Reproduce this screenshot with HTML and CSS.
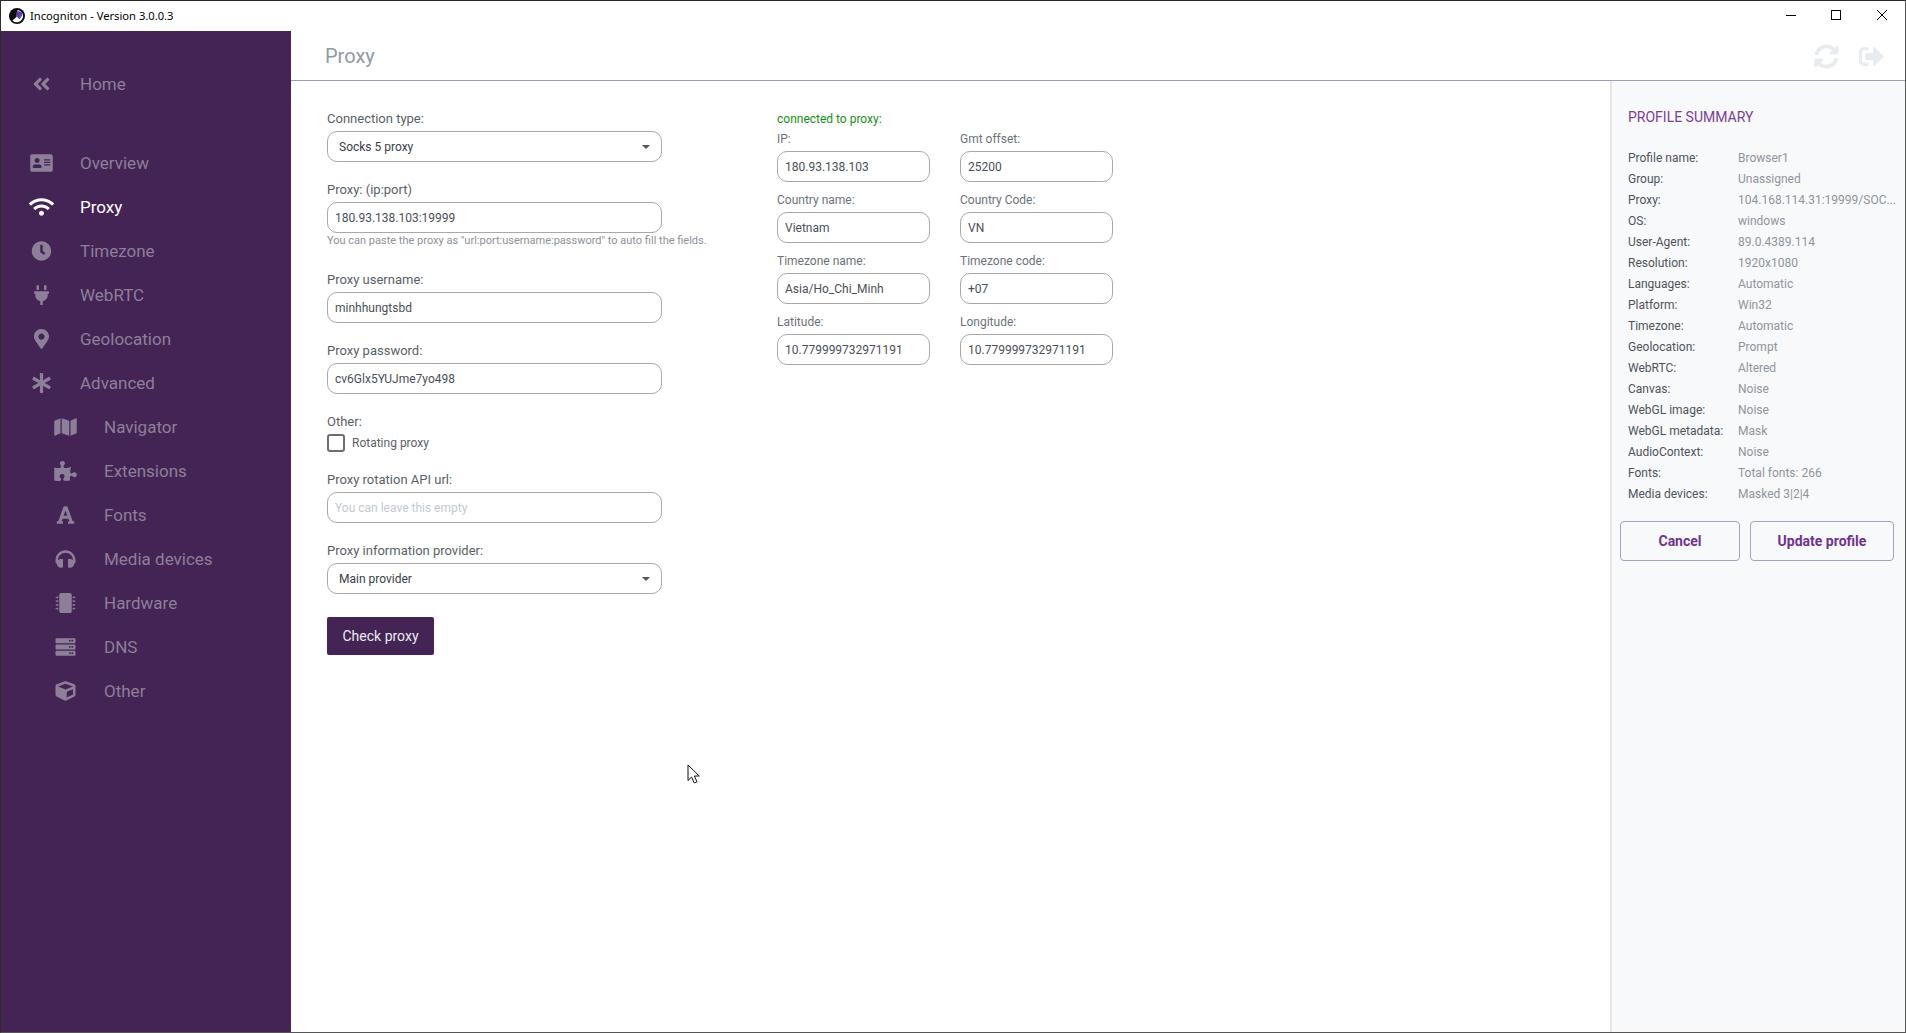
FILE: index.html
```html
<!DOCTYPE html>
<html lang="en">
<head>
<meta charset="utf-8">
<title>Incogniton - Version 3.0.0.3</title>
<link rel="stylesheet" href="styles.css">
</head>
<body>
<div class="window">
  <header class="titlebar">
    <div class="app-title">
      <svg class="app-logo" viewBox="0 0 16 16"><circle cx="8" cy="8" r="8" fill="#0b0b12"/><path d="M8.500 1.900A6.200 6.200 0 1 1 3.400 12.400L7.500 9z" fill="#fff"/><path d="M7.300 5.200C7.600 3.400 9.700 2.900 10.800 3.800 12.200 3.300 13.900 4.900 13.200 6.800L10.500 11.200 7.600 8.600z" fill="#6a35a5"/><path d="M10.800 5.600 13.300 7 10.500 11.200 9.300 9.200z" fill="#3c60c4"/></svg>
      <span>Incogniton - Version 3.0.0.3</span>
    </div>
    <div class="win-controls">
      <svg class="win-btn" viewBox="0 0 12 12"><path d="M2 6.500H12" stroke="#000" fill="none"/></svg>
      <svg class="win-btn" viewBox="0 0 12 12"><rect x="1.500" y="1.500" width="9" height="9" stroke="#000" stroke-width="1" fill="none"/></svg>
      <svg class="win-btn" viewBox="0 0 12 12"><path d="M1 1L11 11M11 1L1 11" stroke="#000" fill="none"/></svg>
    </div>
  </header>
  <div class="app">
    <nav class="sidebar">
      <a class="nav-item nav-home">
        <svg class="nav-icon" viewBox="0 0 448 512"><path d="M223.700 239l136-136c9.400-9.400 24.600-9.400 33.900 0l22.600 22.600c9.400 9.400 9.400 24.600 0 33.900L319.900 256l96.400 96.400c9.400 9.400 9.400 24.600 0 33.900L393.700 409c-9.400 9.400-24.600 9.400-33.900 0l-136-136c-9.500-9.400-9.500-24.600-.1-34zm-192 34l136 136c9.400 9.400 24.600 9.400 33.900 0l22.600-22.600c9.400-9.400 9.400-24.600 0-33.900L127.900 256l96.400-96.400c9.400-9.400 9.400-24.600 0-33.900L201.700 103c-9.400-9.400-24.600-9.400-33.900 0l-136 136c-9.500 9.400-9.500 24.600-.1 34z"/></svg>
        <span>Home</span>
      </a>
      <div class="nav-list">
        <a class="nav-item">
          <svg class="nav-icon" viewBox="0 0 576 512"><path d="M528 32H48C21.500 32 0 53.500 0 80v352c0 26.500 21.500 48 48 48h480c26.500 0 48-21.500 48-48V80c0-26.500-21.500-48-48-48zm-352 96c35.300 0 64 28.700 64 64s-28.700 64-64 64-64-28.700-64-64 28.700-64 64-64zm112 236.800c0 10.600-10 19.200-22.400 19.200H86.400C74 384 64 375.400 64 364.800v-19.200c0-31.800 30.100-57.600 67.200-57.600h5c12.300 5.100 25.700 8 39.800 8s27.600-2.900 39.800-8h5c37.100 0 67.200 25.800 67.200 57.600v19.200zM512 312c0 4.400-3.600 8-8 8H360c-4.400 0-8-3.600-8-8v-16c0-4.400 3.600-8 8-8h144c4.400 0 8 3.600 8 8v16zm0-64c0 4.400-3.600 8-8 8H360c-4.400 0-8-3.600-8-8v-16c0-4.400 3.600-8 8-8h144c4.400 0 8 3.600 8 8v16zm0-64c0 4.400-3.600 8-8 8H360c-4.400 0-8-3.600-8-8v-16c0-4.400 3.600-8 8-8h144c4.400 0 8 3.600 8 8v16z"/></svg>
          <span>Overview</span>
        </a>
        <a class="nav-item is-active">
          <svg class="nav-icon" viewBox="0 0 640 512"><path d="M634.910 154.880C457.740-8.990 182.190-8.930 5.090 154.880c-6.660 6.160-6.790 16.590-.35 22.980l34.240 33.970c6.140 6.100 16.020 6.230 22.400.38 145.920-133.680 371.300-133.710 517.250 0 6.380 5.850 16.260 5.710 22.400-.38l34.240-33.970c6.430-6.390 6.300-16.820-.36-22.980zM320 352c-35.350 0-64 28.650-64 64s28.650 64 64 64 64-28.650 64-64-28.650-64-64-64zm202.670-83.590c-115.260-101.930-290.210-101.820-405.340 0-6.900 6.100-7.120 16.690-.57 23.150l34.440 33.990c6 5.920 15.660 6.320 22.050.8 83.950-72.570 209.740-72.410 293.490 0 6.390 5.520 16.050 5.130 22.050-.8l34.440-33.990c6.560-6.460 6.330-17.060-.56-23.150z"/></svg>
          <span>Proxy</span>
        </a>
        <a class="nav-item">
          <svg class="nav-icon" viewBox="0 0 512 512"><path d="M256 8C119 8 8 119 8 256s111 248 248 248 248-111 248-248S393 8 256 8zm92.490 313l-20 25a16 16 0 0 1-22.490 2.500l-67-49.720a40 40 0 0 1-15-31.230V112a16 16 0 0 1 16-16h32a16 16 0 0 1 16 16v144l58 42.500a16 16 0 0 1 2.490 22.500z"/></svg>
          <span>Timezone</span>
        </a>
        <a class="nav-item">
          <svg class="nav-icon" viewBox="0 0 384 512"><path d="M320 32a32 32 0 0 0-64 0v96h64zm48 128H16a16 16 0 0 0-16 16v32a16 16 0 0 0 16 16h16v32a160.070 160.070 0 0 0 128 156.800V512h64v-99.200A160.070 160.070 0 0 0 352 256v-32h16a16 16 0 0 0 16-16v-32a16 16 0 0 0-16-16zM128 32a32 32 0 0 0-64 0v96h64z"/></svg>
          <span>WebRTC</span>
        </a>
        <a class="nav-item">
          <svg class="nav-icon" viewBox="0 0 384 512"><path d="M172.268 501.670C26.970 291.031 0 256.162 0 192 0 85.961 85.961 0 192 0s192 85.961 192 192c0 64.162-26.970 99.031-172.268 309.670-9.535 13.774-29.930 13.773-39.464 0zM192 272c44.183 0 80-35.817 80-80s-35.817-80-80-80-80 35.817-80 80 35.817 80 80 80z"/></svg>
          <span>Geolocation</span>
        </a>
        <a class="nav-item">
          <svg class="nav-icon" viewBox="0 0 512 512"><path d="M478.210 334.093L336 256l142.210-78.093c11.795-6.477 15.961-21.384 9.232-33.037l-19.480-33.741c-6.728-11.653-21.720-15.499-33.227-8.523L296 186.718l3.475-162.204C299.763 11.061 288.937 0 275.480 0h-38.960c-13.456 0-24.283 11.061-23.994 24.514L216 186.718 77.265 102.607c-11.506-6.976-26.499-3.130-33.227 8.523l-19.480 33.741c-6.728 11.653-2.562 26.560 9.233 33.037L176 256 33.790 334.093c-11.795 6.477-15.961 21.384-9.232 33.037l19.480 33.741c6.728 11.653 21.721 15.499 33.227 8.523L216 325.282l-3.475 162.204C212.237 500.939 223.064 512 236.520 512h38.961c13.456 0 24.283-11.061 23.995-24.514L296 325.282l138.735 84.111c11.506 6.976 26.499 3.130 33.227-8.523l19.480-33.741c6.728-11.653 2.563-26.559-9.232-33.036z"/></svg>
          <span>Advanced</span>
        </a>
        <a class="nav-item nav-sub">
          <svg class="nav-icon" viewBox="0 0 576 512"><path d="M0 117.660v346.320c0 11.320 11.430 19.060 21.940 14.860L160 416V32L20.120 87.950A32.006 32.006 0 0 0 0 117.660zM192 416l192 64V96L192 32v384zM554.060 33.160L416 96v384l139.880-55.950A31.996 31.996 0 0 0 576 394.340V48.020c0-11.320-11.430-19.060-21.940-14.860z"/></svg>
          <span>Navigator</span>
        </a>
        <a class="nav-item nav-sub">
          <svg class="nav-icon" viewBox="0 0 576 512"><path d="M519.442 288.651c-41.519 0-59.500 31.593-82.058 31.593C377.409 320.244 432 144 432 144s-196.288 80-196.288-3.297c0-35.827 36.288-46.250 36.288-85.985C272 19.216 243.885 0 210.539 0c-34.654 0-66.366 18.891-66.366 56.346 0 41.364 31.711 59.277 31.711 81.750C175.885 207.719 0 166.758 0 166.758v333.237s178.635 41.047 178.635-28.662c0-22.473-40-40.107-40-81.471 0-37.456 29.250-56.346 63.577-56.346 33.673 0 61.788 19.216 61.788 54.717 0 39.735-36.288 50.158-36.288 85.985 0 60.803 129.675 25.730 181.230 25.730 0 0-34.725-120.101 25.827-120.101 35.962 0 46.423 36.152 86.308 36.152C556.712 416 576 387.990 576 354.443c0-34.199-18.962-65.792-56.558-65.792z"/></svg>
          <span>Extensions</span>
        </a>
        <a class="nav-item nav-sub">
          <svg class="nav-icon" viewBox="0 0 448 512"><path d="M432 416h-23.410L277.880 53.690A32 32 0 0 0 247.580 32h-47.160a32 32 0 0 0-30.300 21.690L39.410 416H16a16 16 0 0 0-16 16v32a16 16 0 0 0 16 16h128a16 16 0 0 0 16-16v-32a16 16 0 0 0-16-16h-19.600l23.300-64h152.600l23.300 64H304a16 16 0 0 0-16 16v32a16 16 0 0 0 16 16h128a16 16 0 0 0 16-16v-32a16 16 0 0 0-16-16zM176.850 272L224 143.110 271.150 272z"/></svg>
          <span>Fonts</span>
        </a>
        <a class="nav-item nav-sub">
          <svg class="nav-icon" viewBox="0 0 512 512"><path d="M256 32C114.520 32 0 146.496 0 288v48a32 32 0 0 0 17.689 28.622l14.383 7.191C34.083 431.903 83.421 480 144 480h24c13.255 0 24-10.745 24-24V280c0-13.255-10.745-24-24-24h-24c-31.342 0-59.671 12.879-80 33.627V288c0-105.869 86.131-192 192-192s192 86.131 192 192v1.627C427.671 268.879 399.342 256 368 256h-24c-13.255 0-24 10.745-24 24v176c0 13.255 10.745 24 24 24h24c60.579 0 109.917-48.098 111.928-108.187l14.382-7.191A32 32 0 0 0 512 336v-48c0-141.479-114.496-256-256-256z"/></svg>
          <span>Media devices</span>
        </a>
        <a class="nav-item nav-sub">
          <svg class="nav-icon" viewBox="0 0 512 512"><path d="M416 48v416c0 26.510-21.490 48-48 48H144c-26.510 0-48-21.490-48-48V48c0-26.510 21.490-48 48-48h224c26.510 0 48 21.490 48 48zm96 58v12a6 6 0 0 1-6 6h-18v6a6 6 0 0 1-6 6h-42V88h42a6 6 0 0 1 6 6v6h18a6 6 0 0 1 6 6zm0 96v12a6 6 0 0 1-6 6h-18v6a6 6 0 0 1-6 6h-42v-48h42a6 6 0 0 1 6 6v6h18a6 6 0 0 1 6 6zm0 96v12a6 6 0 0 1-6 6h-18v6a6 6 0 0 1-6 6h-42v-48h42a6 6 0 0 1 6 6v6h18a6 6 0 0 1 6 6zm0 96v12a6 6 0 0 1-6 6h-18v6a6 6 0 0 1-6 6h-42v-48h42a6 6 0 0 1 6 6v6h18a6 6 0 0 1 6 6zM30 376h42v48H30a6 6 0 0 1-6-6v-6H6a6 6 0 0 1-6-6v-12a6 6 0 0 1 6-6h18v-6a6 6 0 0 1 6-6zm0-96h42v48H30a6 6 0 0 1-6-6v-6H6a6 6 0 0 1-6-6v-12a6 6 0 0 1 6-6h18v-6a6 6 0 0 1 6-6zm0-96h42v48H30a6 6 0 0 1-6-6v-6H6a6 6 0 0 1-6-6v-12a6 6 0 0 1 6-6h18v-6a6 6 0 0 1 6-6zm0-96h42v48H30a6 6 0 0 1-6-6v-6H6a6 6 0 0 1-6-6v-12a6 6 0 0 1 6-6h18v-6a6 6 0 0 1 6-6z"/></svg>
          <span>Hardware</span>
        </a>
        <a class="nav-item nav-sub">
          <svg class="nav-icon" viewBox="0 0 512 512"><path d="M480 160H32c-17.673 0-32-14.327-32-32V64c0-17.673 14.327-32 32-32h448c17.673 0 32 14.327 32 32v64c0 17.673-14.327 32-32 32zm-48-88c-13.255 0-24 10.745-24 24s10.745 24 24 24 24-10.745 24-24-10.745-24-24-24zm-64 0c-13.255 0-24 10.745-24 24s10.745 24 24 24 24-10.745 24-24-10.745-24-24-24zm112 248H32c-17.673 0-32-14.327-32-32v-64c0-17.673 14.327-32 32-32h448c17.673 0 32 14.327 32 32v64c0 17.673-14.327 32-32 32zm-48-88c-13.255 0-24 10.745-24 24s10.745 24 24 24 24-10.745 24-24-10.745-24-24-24zm-64 0c-13.255 0-24 10.745-24 24s10.745 24 24 24 24-10.745 24-24-10.745-24-24-24zm112 248H32c-17.673 0-32-14.327-32-32v-64c0-17.673 14.327-32 32-32h448c17.673 0 32 14.327 32 32v64c0 17.673-14.327 32-32 32zm-48-88c-13.255 0-24 10.745-24 24s10.745 24 24 24 24-10.745 24-24-10.745-24-24-24zm-64 0c-13.255 0-24 10.745-24 24s10.745 24 24 24 24-10.745 24-24-10.745-24-24-24z"/></svg>
          <span>DNS</span>
        </a>
        <a class="nav-item nav-sub">
          <svg class="nav-icon" viewBox="0 0 512 512"><path d="M239.100 6.300l-208 78c-18.700 7-31.100 25-31.100 45v225.100c0 18.200 10.300 34.800 26.500 42.900l208 104c13.500 6.800 29.400 6.800 42.900 0l208-104c16.300-8.100 26.500-24.800 26.500-42.900V129.300c0-20-12.400-37.900-31.100-44.900l-208-78C262 2.200 250 2.200 239.100 6.300zM256 68.400l192 72v1.100l-192 78-192-78v-1.100l192-72zm32 356V275.500l160-65v133.900l-160 80z"/></svg>
          <span>Other</span>
        </a>
      </div>
    </nav>
    <main class="main">
      <div class="page-header">
        <h1 class="page-title">Proxy</h1>
        <div class="page-actions">
          <svg class="page-action" viewBox="0 0 512 512"><path d="M370.720 133.280C339.458 104.008 298.888 87.962 255.848 88c-77.458.068-144.328 53.178-162.791 126.850-1.344 5.363-6.122 9.150-11.651 9.150H24.103c-7.498 0-13.194-6.807-11.807-14.176C33.933 94.924 134.813 8 256 8c66.448 0 126.791 26.136 171.315 68.685L463.030 40.970C478.149 25.851 504 36.559 504 57.941V192c0 13.255-10.745 24-24 24H345.941c-21.382 0-32.090-25.851-16.971-40.971l41.750-41.749zM32 296h134.059c21.382 0 32.090 25.851 16.971 40.971l-41.750 41.750c31.262 29.273 71.835 45.319 114.876 45.280 77.418-.070 144.315-53.144 162.787-126.849 1.344-5.363 6.122-9.150 11.651-9.150h57.304c7.498 0 13.194 6.807 11.807 14.176C478.067 417.076 377.187 504 256 504c-66.448 0-126.791-26.136-171.315-68.685L48.970 471.030C33.851 486.149 8 475.441 8 454.059V320c0-13.255 10.745-24 24-24z"/></svg>
          <svg class="page-action" viewBox="0 0 512 512"><path d="M497 273L329 441c-15 15-41 4.500-41-17v-96H152c-13.300 0-24-10.700-24-24v-96c0-13.300 10.700-24 24-24h136V88c0-21.400 25.900-32 41-17l168 168c9.300 9.400 9.300 24.600 0 34zM192 436v-40c0-6.600-5.400-12-12-12H96c-17.700 0-32-14.300-32-32V160c0-17.700 14.300-32 32-32h84c6.600 0 12-5.400 12-12V76c0-6.600-5.400-12-12-12H96c-53 0-96 43-96 96v192c0 53 43 96 96 96h84c6.600 0 12-5.400 12-12z"/></svg>
        </div>
      </div>
      <div class="content">
        <section class="form-area">
          <div class="column-main">
            <div class="field">
              <label class="label">Connection type:</label>
              <div class="control control-select"><span>Socks 5 proxy</span><i class="caret"></i></div>
            </div>
            <div class="field field-hinted">
              <label class="label">Proxy: (ip:port)</label>
              <div class="control">180.93.138.103:19999</div>
              <p class="hint">You can paste the proxy as "url:port:username:password" to auto fill the fields.</p>
            </div>
            <div class="field">
              <label class="label">Proxy username:</label>
              <div class="control">minhhungtsbd</div>
            </div>
            <div class="field">
              <label class="label">Proxy password:</label>
              <div class="control">cv6Glx5YUJme7yo498</div>
            </div>
            <div class="field">
              <label class="label">Other:</label>
              <div class="check-row"><span class="checkbox"></span><span>Rotating proxy</span></div>
            </div>
            <div class="field">
              <label class="label">Proxy rotation API url:</label>
              <div class="control control-placeholder">You can leave this empty</div>
            </div>
            <div class="field">
              <label class="label">Proxy information provider:</label>
              <div class="control control-select"><span>Main provider</span><i class="caret"></i></div>
            </div>
            <button class="btn-primary">Check proxy</button>
          </div>
          <div class="column-info">
            <p class="status">connected to proxy:</p>
            <div class="info-grid">
              <div class="info-field"><label class="label">IP:</label><div class="control">180.93.138.103</div></div>
              <div class="info-field"><label class="label">Gmt offset:</label><div class="control">25200</div></div>
              <div class="info-field"><label class="label">Country name:</label><div class="control">Vietnam</div></div>
              <div class="info-field"><label class="label">Country Code:</label><div class="control">VN</div></div>
              <div class="info-field"><label class="label">Timezone name:</label><div class="control">Asia/Ho_Chi_Minh</div></div>
              <div class="info-field"><label class="label">Timezone code:</label><div class="control">+07</div></div>
              <div class="info-field"><label class="label">Latitude:</label><div class="control">10.779999732971191</div></div>
              <div class="info-field"><label class="label">Longitude:</label><div class="control">10.779999732971191</div></div>
            </div>
          </div>
        </section>
        <aside class="summary">
          <h2 class="summary-title">PROFILE SUMMARY</h2>
          <dl class="summary-list">
            <div class="summary-row"><dt>Profile name:</dt><dd>Browser1</dd></div>
            <div class="summary-row"><dt>Group:</dt><dd>Unassigned</dd></div>
            <div class="summary-row"><dt>Proxy:</dt><dd>104.168.114.31:19999/SOC...</dd></div>
            <div class="summary-row"><dt>OS:</dt><dd>windows</dd></div>
            <div class="summary-row"><dt>User-Agent:</dt><dd>89.0.4389.114</dd></div>
            <div class="summary-row"><dt>Resolution:</dt><dd>1920x1080</dd></div>
            <div class="summary-row"><dt>Languages:</dt><dd>Automatic</dd></div>
            <div class="summary-row"><dt>Platform:</dt><dd>Win32</dd></div>
            <div class="summary-row"><dt>Timezone:</dt><dd>Automatic</dd></div>
            <div class="summary-row"><dt>Geolocation:</dt><dd>Prompt</dd></div>
            <div class="summary-row"><dt>WebRTC:</dt><dd>Altered</dd></div>
            <div class="summary-row"><dt>Canvas:</dt><dd>Noise</dd></div>
            <div class="summary-row"><dt>WebGL image:</dt><dd>Noise</dd></div>
            <div class="summary-row"><dt>WebGL metadata:</dt><dd>Mask</dd></div>
            <div class="summary-row"><dt>AudioContext:</dt><dd>Noise</dd></div>
            <div class="summary-row"><dt>Fonts:</dt><dd>Total fonts: 266</dd></div>
            <div class="summary-row"><dt>Media devices:</dt><dd>Masked 3|2|4</dd></div>
          </dl>
          <div class="summary-actions">
            <button class="btn-outline btn-cancel">Cancel</button>
            <button class="btn-outline btn-update">Update profile</button>
          </div>
        </aside>
      </div>
    </main>
  </div>
  <svg class="cursor" viewBox="0 0 14 22"><path d="M1 1V16.500L4.600 13 7.200 19 10 17.800 7.400 12H12.300Z" fill="#fff" stroke="#111" stroke-width="1"/></svg>
</div>
</body>
</html>
```
FILE: styles.css
```css
* { box-sizing: border-box; }
html, body { margin: 0; height: 100%; }
body { font-family: Roboto, "Noto Sans", sans-serif; background: #fff; overflow: hidden; }
.window { position: relative; width: 1906px; height: 1033px; display: flex; flex-direction: column; border-top: 1px solid #2b2b2b; border-left: 1px solid #2b2b2b; border-right: 1px solid #555; border-bottom: 1px solid #555; }
.titlebar { flex: 0 0 30px; display: flex; justify-content: space-between; align-items: center; background: #fff; }
.app-title { display: flex; align-items: center; gap: 5px; padding: 0 0 1px 8px; font-family: "Noto Sans", "Open Sans", sans-serif; font-size: 11.2px; color: #000; }
.app-logo { width: 16px; height: 16px; }
.win-controls { display: flex; gap: 34px; padding: 0 17px 2px 0; }
.win-btn { width: 12px; height: 12px; }
.app { flex: 1; display: flex; min-height: 0; }
.sidebar { width: 290px; flex: none; background: #432455; padding-top: 31px; }
.nav-item { display: flex; align-items: center; height: 44px; padding-left: 28px; font-size: 17px; color: #8e7f99; }
.nav-icon { width: 25px; height: 20px; margin-right: 26px; fill: currentColor; flex: none; }
.nav-list { margin-top: 35px; }
.nav-item.is-active { color: #fff; }
.nav-sub { padding-left: 52px; }
.main { flex: 1; display: flex; flex-direction: column; min-width: 0; }
.page-header { flex: 0 0 50px; display: flex; justify-content: space-between; align-items: center; padding: 0 21px 0 34px; border-bottom: 1px solid #a59bb8; }
.page-title { margin: 0; font-size: 20px; font-weight: 400; color: #919aa3; }
.page-actions { display: flex; gap: 20px; padding-top: 2px; }
.page-action { width: 25px; height: 25px; fill: #e9ecef; }
.content { flex: 1; display: flex; min-height: 0; }
.form-area { flex: 1; display: flex; gap: 115px; padding: 30px 0 0 36px; }
.column-main { width: 335px; flex: none; }
.field { margin-bottom: 20px; }
.field-hinted { margin-bottom: 24px; }
.label { display: block; font-size: 13px; line-height: 15px; color: #5a5f66; margin-bottom: 5px; }
.control { height: 31px; border: 1px solid #a8a8a8; border-radius: 10px; padding: 0 7px; display: flex; align-items: center; font-size: 12px; color: #495057; background: #fff; }
.control-select { justify-content: space-between; padding: 0 11px; color: #3c4046; }
.caret { width: 0; height: 0; border-left: 4px solid transparent; border-right: 4px solid transparent; border-top: 4px solid #555; }
.control-placeholder { color: #c4cacf; }
.hint { margin: 1px 0 0; font-size: 11px; line-height: 14px; color: #8c9298; white-space: nowrap; }
.check-row { display: flex; align-items: center; gap: 7px; font-size: 12px; color: #5a5f66; }
.checkbox { width: 18px; height: 18px; border: 2px solid #6c6c72; border-radius: 3px; background: #fff; }
.btn-primary { display: block; width: 107px; height: 38px; margin-top: 23px; border: 0; border-radius: 2px; background: #432455; color: #ececf0; font: 14px Roboto, sans-serif; }
.column-info { width: 336px; flex: none; padding-top: 1px; }
.status { margin: 0 0 5px; font-size: 12px; line-height: 15px; color: #159015; }
.info-grid { display: grid; grid-template-columns: 153px 153px; column-gap: 30px; row-gap: 11px; }
.info-field .label { font-size: 12px; color: #6c727a; margin-bottom: 4px; }
.summary { width: 295px; flex: none; background: #f8f9fa; border-left: 2px solid #e4e6e8; padding: 27px 10px 0 8px; }
.summary-title { margin: 0 0 21px 8px; font-size: 14px; line-height: 18px; font-weight: 400; color: #7b3f98; }
.summary-list { margin: 0 0 17px 8px; }
.summary-row { display: flex; height: 21px; align-items: center; font-size: 12px; white-space: nowrap; }
.summary-row dt { width: 110px; flex: none; color: #4e535a; }
.summary-row dd { margin: 0; color: #8f959c; }
.summary-actions { display: flex; gap: 10px; }
.btn-outline { height: 40px; border: 1px solid #a79fbc; border-radius: 4px; background: transparent; color: #6f3291; font: 700 14px Roboto, sans-serif; }
.btn-cancel { width: 120px; }
.btn-update { width: 144px; }
.cursor { position: absolute; left: 686px; top: 763px; width: 14px; height: 22px; }
```
